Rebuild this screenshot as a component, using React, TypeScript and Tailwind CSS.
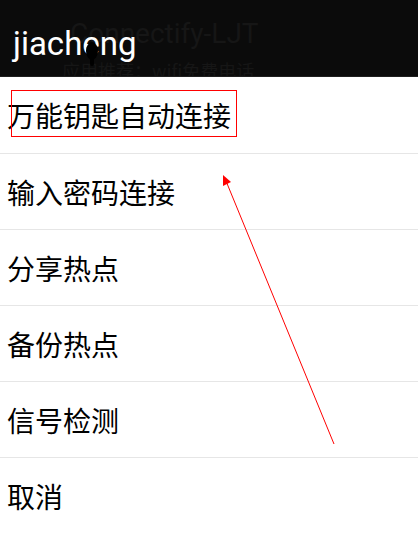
import React from 'react';

const items = ['万能钥匙自动连接', '输入密码连接', '分享热点', '备份热点', '信号检测', '取消'];

const App: React.FC = () => {
    return (
        <div className="relative w-[418px] h-[534px] overflow-hidden bg-white">
            {/* dialog title over the app bar underneath */}
            <div className="relative h-[77px] overflow-hidden border-b border-[#1f1f1f] bg-[#0b0b0b]">
                <div className="absolute left-[70px] top-[14px] text-[28px] leading-[40px] text-[#161616] font-['Roboto',sans-serif]">
                    Connectify-LJT
                </div>
                <div className="absolute left-[62px] top-[58px] text-[18px] leading-[24px] text-[#161616] font-['Noto_Sans_CJK_SC',sans-serif]">
                    应用推荐：wifi免费电话
                </div>
                <div className="absolute left-[13px] top-[20px] text-[33px] leading-[48px] text-white font-['Roboto',sans-serif]">
                    jiacheng
                </div>
                <svg className="absolute left-0 top-0" width="418" height="77">
                    <ellipse cx="92" cy="51" rx="6" ry="9" fill="#000" />
                    <rect x="90" y="56" width="4" height="10" rx="2" fill="#000" />
                </svg>
            </div>

            <div className="flex flex-col font-['Noto_Sans_CJK_SC',sans-serif]">
                {items.map((label, index) => (
                    <div
                        key={label}
                        className={`flex h-[76px] items-center pl-[7px] text-[28px] text-black ${index > 0 ? 'border-t border-[#e6e6e6]' : ''}`}
                    >
                        {label}
                    </div>
                ))}
            </div>

            {/* annotation */}
            <div className="absolute left-[11px] top-[90px] h-[47px] w-[226px] border border-[#ff0000]" />
            <svg className="absolute left-0 top-0 pointer-events-none" width="418" height="534">
                <line x1="226" y1="181" x2="334" y2="444" stroke="#ff0000" strokeWidth="1" />
                <polygon points="223,175 231,182 223,186" fill="#ff0000" />
            </svg>
        </div>
    );
};

export default App;
